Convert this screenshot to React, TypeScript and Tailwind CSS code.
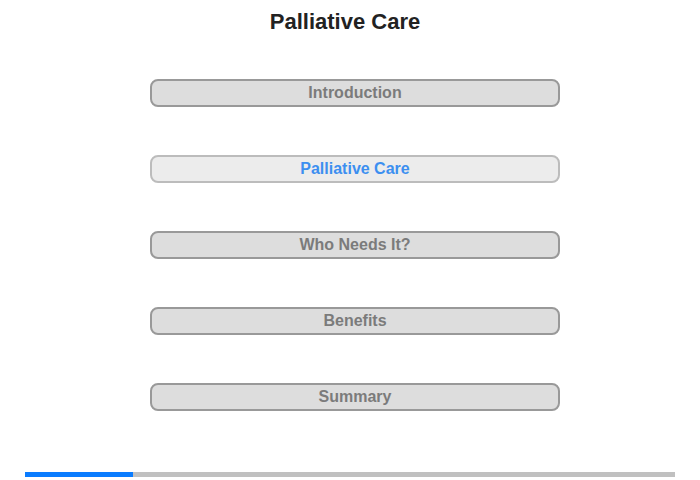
import React from 'react';

const items = [
  { label: 'Introduction', active: false },
  { label: 'Palliative Care', active: true },
  { label: 'Who Needs It?', active: false },
  { label: 'Benefits', active: false },
  { label: 'Summary', active: false },
];

const App: React.FC = () => {
  return (
    <div className="w-[700px] h-[480px] bg-white flex flex-col font-['Liberation_Sans',Arial,sans-serif]">
      <h1 className="mt-[9px] pr-[10px] text-center text-[22px] leading-[26px] font-bold text-[#222]">
        Palliative Care
      </h1>

      <div className="mt-[44px] ml-[150px] w-[410px] flex flex-col gap-[48px]">
        {items.map((item, idx) => (
          <button
            key={idx}
            className={`h-[28px] rounded-[8px] border-2 text-[16px] font-bold leading-none ${
              item.active
                ? 'bg-[#ececec] border-[#bcbcbc] text-[#3c8ff0]'
                : 'bg-[#dddddd] border-[#999999] text-[#7b7b7b]'
            }`}
          >
            {item.label}
          </button>
        ))}
      </div>

      <div className="mt-auto mb-[3px] mx-[25px] h-[5px] bg-[#c0c0c0] flex">
        <div className="w-[108px] h-full bg-[#0a7cff]" />
      </div>
    </div>
  );
};

export default App;
